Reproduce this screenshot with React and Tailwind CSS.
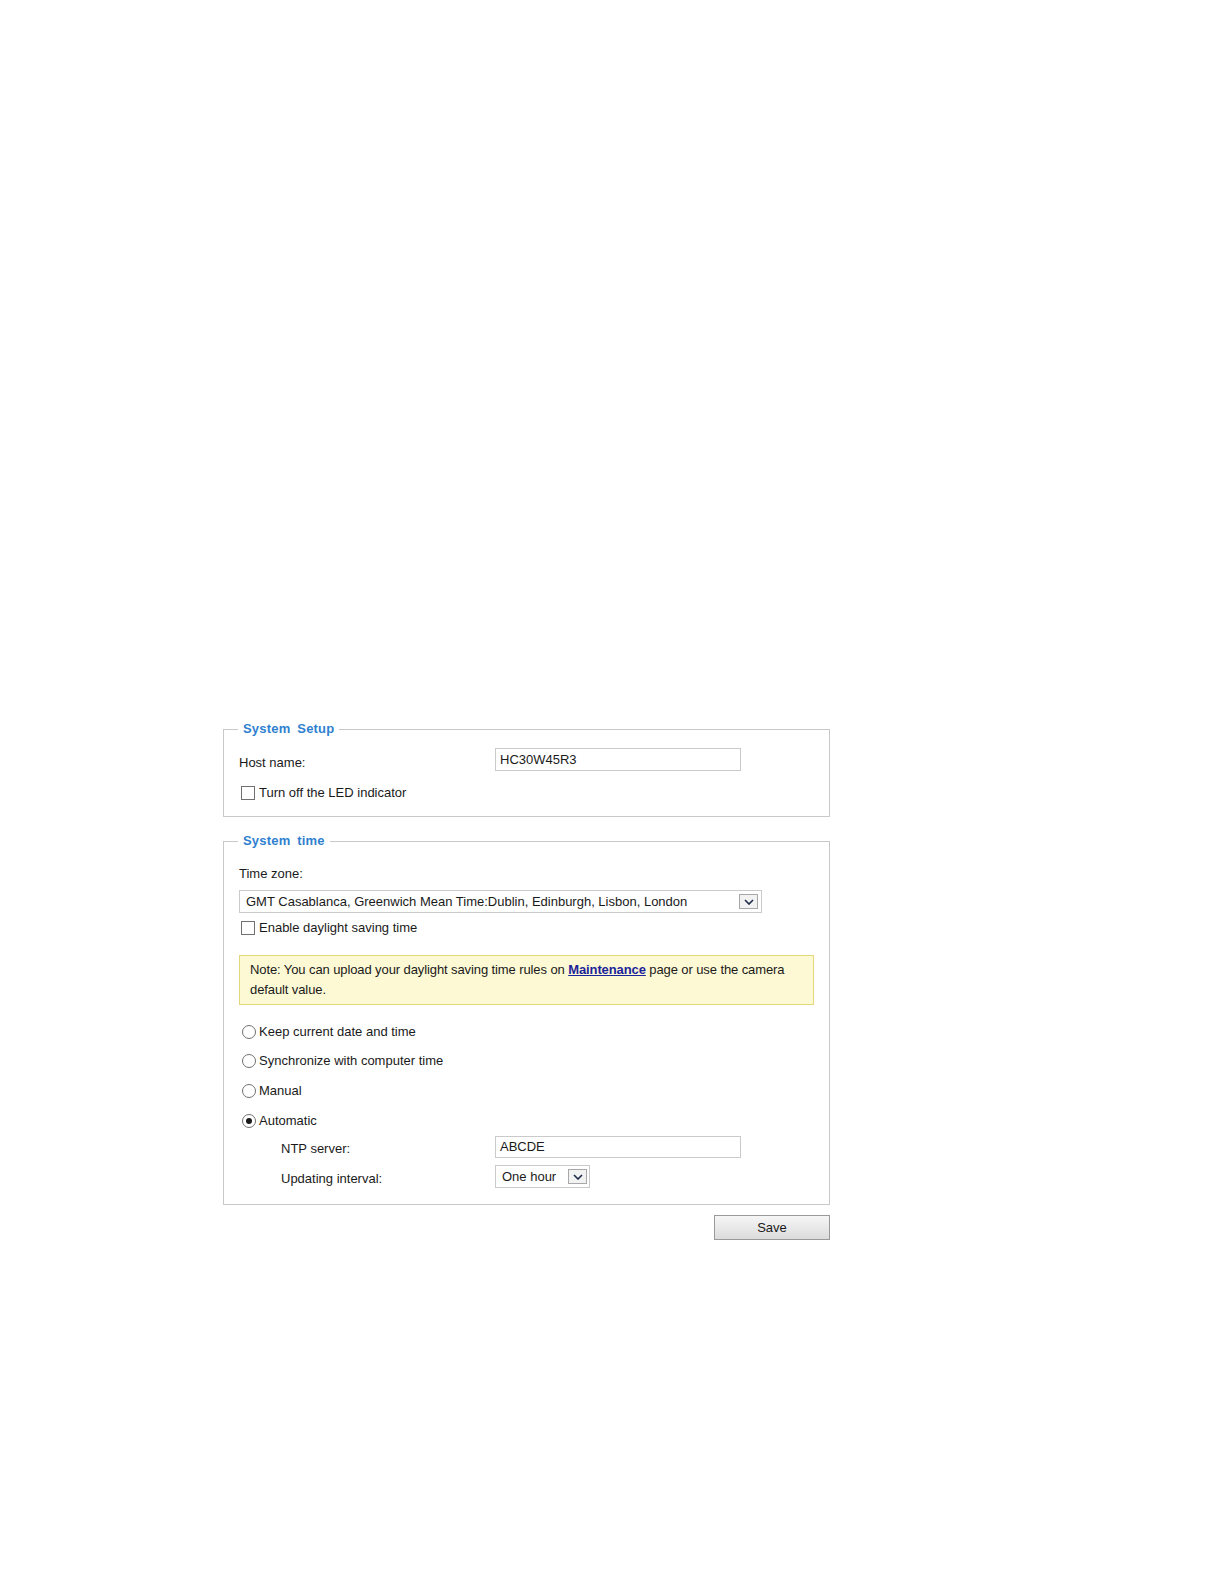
import React from 'react';

const font = { fontFamily: '"Liberation Sans", Arial, sans-serif' };

const Checkbox = ({ label, className = '' }) => (
  <div className={`flex items-center h-[16px] ${className}`}>
    <span className="ml-[3px] w-[14px] h-[14px] border border-[#707070] bg-white shrink-0"></span>
    <span className="ml-[4px] text-[13px] leading-[16px] text-[#1a1a1a]">{label}</span>
  </div>
);

const Radio = ({ label, checked, className = '' }) => (
  <div className={`flex items-center h-[16px] ${className}`}>
    <span className="ml-[4px] w-[14px] h-[14px] rounded-full border border-[#707070] bg-white shrink-0 flex items-center justify-center">
      {checked && <span className="w-[6px] h-[6px] rounded-full bg-[#1a1a1a]"></span>}
    </span>
    <span className="ml-[3px] text-[13px] leading-[16px] text-[#1a1a1a]">{label}</span>
  </div>
);

const Arrow = () => (
  <span className="w-[19px] h-[15px] border border-[#a8a8a8] bg-[#f2f2f2] flex items-center justify-center">
    <svg width="10" height="6" viewBox="0 0 10 6">
      <path d="M1 1 L5 5 L9 1" fill="none" stroke="#1c2a4a" strokeWidth="1.6" />
    </svg>
  </span>
);

const Legend = ({ children }) => (
  <legend className="ml-0 px-[5px] text-[13px] leading-[16px] font-bold text-[#2f7fcf] tracking-[0.2px] [word-spacing:3px]">
    {children}
  </legend>
);

export default function App() {
  return (
    <div className="min-h-[1584px] bg-white pt-[721px]" style={font}>
      <div className="ml-[223px] w-[607px]">
        <fieldset className="border border-[#c8c8c8] px-[14px] pt-0 pb-[15px] m-0">
          <Legend>System Setup</Legend>
          <div className="mt-[11px] flex items-center h-[23px]">
            <span className="w-[257px] pl-[1px] pt-[6px] text-[13px] text-[#1a1a1a]">Host name:</span>
            <div className="w-[246px] h-[23px] border border-[#cacaca] bg-white flex items-center pl-[4px] text-[13px] text-[#1a1a1a]">
              HC30W45R3
            </div>
          </div>
          <Checkbox label="Turn off the LED indicator" className="mt-[14px]" />
        </fieldset>

        <fieldset className="mt-[16px] border border-[#c8c8c8] px-[14px] pt-0 pb-[16px] m-0">
          <Legend>System time</Legend>
          <div className="mt-[17px] pl-[1px] text-[13px] leading-[16px] text-[#1a1a1a]">Time zone:</div>
          <div className="mt-[8px] ml-[1px] w-[523px] h-[23px] border border-[#cacaca] bg-white flex items-center justify-between pl-[6px] pr-[3px]">
            <span className="text-[13px] text-[#1a1a1a]">GMT Casablanca, Greenwich Mean Time:Dublin, Edinburgh, Lisbon, London</span>
            <Arrow />
          </div>
          <Checkbox label="Enable daylight saving time" className="mt-[7px]" />
          <div className="mt-[19px] ml-[1px] w-[575px] h-[50px] border border-[#e5d77c] bg-[#fdf9d4] px-[10px] py-[4px] text-[13px] leading-[20px] tracking-[-0.1px] text-[#1a1a1a]">
            Note: You can upload your daylight saving time rules on{' '}
            <a className="font-bold underline text-[#1b239a]">Maintenance</a> page or use the camera default value.
          </div>
          <Radio label="Keep current date and time" className="mt-[19px]" />
          <Radio label="Synchronize with computer time" className="mt-[13px]" />
          <Radio label="Manual" className="mt-[14px]" />
          <Radio label="Automatic" checked className="mt-[14px]" />
          <div className="mt-[7px] flex items-center h-[22px]">
            <span className="w-[257px] pl-[43px] pt-[4px] text-[13px] text-[#1a1a1a]">NTP server:</span>
            <div className="w-[246px] h-[22px] border border-[#cacaca] bg-white flex items-center pl-[4px] text-[13px] text-[#1a1a1a]">
              ABCDE
            </div>
          </div>
          <div className="mt-[7px] flex items-center h-[23px]">
            <span className="w-[257px] pl-[43px] pt-[4px] text-[13px] text-[#1a1a1a]">Updating interval:</span>
            <div className="w-[95px] h-[23px] border border-[#cacaca] bg-white flex items-center justify-between pl-[6px] pr-[2px]">
              <span className="text-[13px] text-[#1a1a1a]">One hour</span>
              <Arrow />
            </div>
          </div>
        </fieldset>

        <div className="mt-[10px] flex justify-end">
          <button className="w-[116px] h-[25px] border border-[#9a9a9a] bg-gradient-to-b from-[#f6f6f6] to-[#dcdcdc] text-[13px] text-[#1a1a1a]">
            Save
          </button>
        </div>
      </div>
    </div>
  );
}
